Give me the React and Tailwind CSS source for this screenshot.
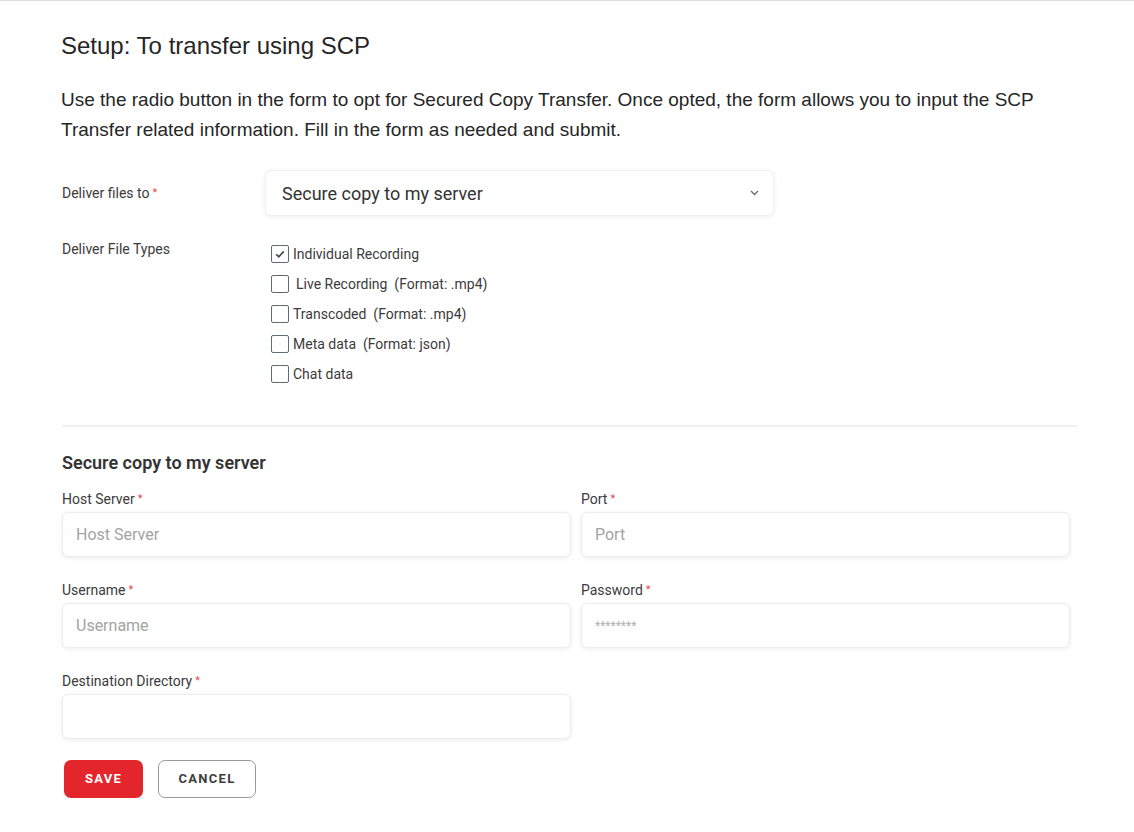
import React from "react";

const Req = () => <span className="relative -top-[2px] ml-[3px] text-[11px] leading-none text-[#e5484d]">*</span>;

const Field = ({ label, placeholder, type = "text" }) => (
  <div className="flex flex-col">
    <label className="block h-[20px] text-[14px] leading-[20px] text-[#3b3b3b]">
      {label}
      <Req />
    </label>
    <input
      type="text"
      placeholder={placeholder}
      className={`mt-[3px] h-[45px] w-full rounded-[6px] bg-white px-[13px] border border-[#ececf1] shadow-[0_1px_4px_rgba(0,0,0,0.08)] outline-none placeholder:text-[#a3a3a3] ${
        type === "password" ? "text-[13px] placeholder:text-[12px] placeholder:text-[#b0b0b0]" : "text-[16px]"
      }`}
    />
  </div>
);

const Check = ({ checked, children, pad }) => (
  <label className="flex items-center h-[30px] text-[14px] text-[#3b3b3b]">
    <span className="flex h-[18px] w-[18px] items-center justify-center rounded-[2px] border-[1.5px] border-[#5f6b77] bg-white">
      {checked && (
        <svg width="12" height="12" viewBox="0 0 12 12">
          <path d="M2.2 6.2 L4.8 8.8 L9.8 3.4" fill="none" stroke="#3a4652" strokeWidth="1.6" />
        </svg>
      )}
    </span>
    <span className={pad ? "ml-[7px]" : "ml-[4px]"}>{children}</span>
  </label>
);

export default function App() {
  return (
    <div className="min-h-[832px] bg-white border-t border-[#dcdcdc]">
      <div className="pl-[61px] pr-[57px]" style={{ fontFamily: "Arial, 'Liberation Sans', sans-serif" }}>
        <h1 className="pt-[31px] text-[24px] leading-[28px] text-[#262626]">Setup: To transfer using SCP</h1>
        <p className="mt-[25px] text-[19px] leading-[30px] text-[#262626]">
          Use the radio button in the form to opt for Secured Copy Transfer. Once opted, the form allows you to input the SCP
          Transfer related information. Fill in the form as needed and submit.
        </p>
      </div>

      <div className="pl-[62px] pr-[57px]" style={{ fontFamily: "Roboto, 'Noto Sans', sans-serif" }}>
        <div className="mt-[25px] flex items-start">
          <div className="w-[203px] pt-[13px] text-[14px] leading-[20px] text-[#3b3b3b]">
            Deliver files to
            <Req />
          </div>
          <div className="flex h-[46px] w-[509px] items-center justify-between rounded-[6px] border border-[#f0f0f3] bg-white pl-[16px] pr-[14px] shadow-[0_1px_5px_rgba(0,0,0,0.08)]">
            <span className="text-[18px] text-[#333]">Secure copy to my server</span>
            <svg width="9" height="6" viewBox="0 0 9 6">
              <path d="M1 1 L4.5 4.5 L8 1" fill="none" stroke="#6b6b6b" strokeWidth="1.3" />
            </svg>
          </div>
        </div>

        <div className="mt-[23px] flex items-start">
          <div className="w-[209px] text-[14px] leading-[20px] text-[#3b3b3b]">Deliver File Types</div>
          <div className="flex flex-col">
            <Check checked>Individual Recording</Check>
            <Check pad>Live Recording&nbsp; (Format: .mp4)</Check>
            <Check>Transcoded&nbsp; (Format: .mp4)</Check>
            <Check>Meta data&nbsp; (Format: json)</Check>
            <Check>Chat data</Check>
          </div>
        </div>

        <div className="mt-[36px] h-[2px] w-[1015px] bg-[#f0f0f0]" />

        <h2 className="mt-[25px] text-[18px] font-semibold leading-[22px] text-[#333]">Secure copy to my server</h2>

        <div className="mt-[15px] grid grid-cols-[509px_489px] gap-x-[10px] gap-y-[23px]">
          <Field label="Host Server" placeholder="Host Server" />
          <Field label="Port" placeholder="Port" />
          <Field label="Username" placeholder="Username" />
          <Field label="Password" placeholder="********" type="password" />
          <Field label="Destination Directory" placeholder="" />
        </div>

        <div className="mt-[21px] flex items-center gap-[15px] pl-[2px]">
          <button className="h-[38px] w-[79px] rounded-[7px] bg-[#e2262b] text-[13px] font-bold tracking-[1.3px] text-white">
            SAVE
          </button>
          <button className="h-[38px] w-[98px] rounded-[7px] border border-[#9a9a9a] bg-white text-[13px] font-bold tracking-[1.3px] text-[#3d3d3d]">
            CANCEL
          </button>
        </div>
      </div>
    </div>
  );
}
